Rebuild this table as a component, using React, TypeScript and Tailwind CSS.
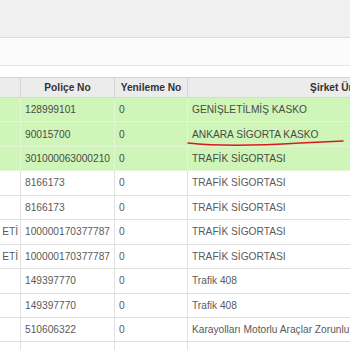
import React from "react";

type Row = { c0: string; p: string; y: string; s: string; green?: boolean };

const rows: Row[] = [
  { c0: "", p: "128999101", y: "0", s: "GENİŞLETİLMİŞ KASKO", green: true },
  { c0: "", p: "90015700", y: "0", s: "ANKARA SİGORTA KASKO", green: true },
  { c0: "", p: "301000063000210", y: "0", s: "TRAFİK SİGORTASI", green: true },
  { c0: "", p: "8166173", y: "0", s: "TRAFİK SİGORTASI" },
  { c0: "", p: "8166173", y: "0", s: "TRAFİK SİGORTASI" },
  { c0: "ETİ", p: "100000170377787", y: "0", s: "TRAFİK SİGORTASI" },
  { c0: "ETİ", p: "100000170377787", y: "0", s: "TRAFİK SİGORTASI" },
  { c0: "", p: "149397770", y: "0", s: "Trafik 408" },
  { c0: "", p: "149397770", y: "0", s: "Trafik 408" },
  { c0: "", p: "510606322", y: "0", s: "Karayolları Motorlu Araçlar Zorunlu Mali Sorumluluk" },
  { c0: "", p: "", y: "", s: "" },
];

export default function App() {
  return (
    <div
      className="relative w-[350px] h-[350px] overflow-hidden bg-white text-[10.2px]"
      style={{ fontFamily: '"Liberation Sans", Arial, sans-serif' }}
    >
      <div className="h-[38px] bg-[#f0f0f0] border-b border-[#dcdcdc]" />
      <div className="h-[28px] bg-[#fbfbfb] border-b border-[#e6e6e6]" />
      <div className="h-[12px] bg-white border-b border-[#d4d4d4]" />
      <div className="grid grid-cols-[21px_94px_73px_318px] h-[20px] bg-[#ececec] border-b border-[#d8d8d8] font-bold text-[#333]">
        <div className="border-r border-[#d6d6d6]" />
        <div className="flex items-center justify-center border-r border-[#d6d6d6]">Poliçe No</div>
        <div className="flex items-center justify-center border-r border-[#d6d6d6]">Yenileme No</div>
        <div className="flex items-center justify-center whitespace-nowrap">Şirket Ürün Adı</div>
      </div>
      {rows.map((r, i) => (
        <div
          key={i}
          className={
            r.green
              ? "grid grid-cols-[21px_94px_73px_318px] h-[24.45px] bg-[#cff5b8] border-b border-[#e2f6d6] text-[#4a4a4a]"
              : "grid grid-cols-[21px_94px_73px_318px] h-[24.45px] bg-white border-b border-[#dedede] text-[#5a5a5a]"
          }
        >
          <div
            className={
              r.green
                ? "flex items-center justify-end overflow-hidden whitespace-nowrap pr-[2px] border-r border-[#e2f6d6]"
                : "flex items-center justify-end overflow-hidden whitespace-nowrap pr-[2px] border-r border-[#e2e2e2]"
            }
          >
            {r.c0}
          </div>
          <div
            className={
              r.green
                ? "flex items-center pl-[4px] border-r border-[#e2f6d6]"
                : "flex items-center pl-[4px] border-r border-[#e2e2e2]"
            }
          >
            {r.p}
          </div>
          <div
            className={
              r.green
                ? "flex items-center pl-[4px] border-r border-[#e2f6d6]"
                : "flex items-center pl-[4px] border-r border-[#e2e2e2]"
            }
          >
            {r.y}
          </div>
          <div className="flex items-center pl-[4px] whitespace-nowrap overflow-hidden">{r.s}</div>
        </div>
      ))}
      <svg className="absolute left-0 top-0 pointer-events-none" width="350" height="350">
        <path
          d="M188 143 C 215 146, 260 145.5, 300 143 C 320 142, 335 141.5, 343 141"
          fill="none"
          stroke="#d41c1c"
          strokeWidth="1.4"
          strokeLinecap="round"
        />
      </svg>
    </div>
  );
}
